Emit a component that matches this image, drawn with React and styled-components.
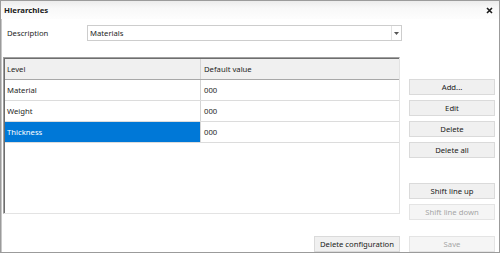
import React from "react";
import styled, { createGlobalStyle } from "styled-components";

const Global = createGlobalStyle`
    html, body {
        margin:0;
        padding:0;
        background:#ffffff;
    }
    body {
        font-family: "Noto Sans", "DejaVu Sans", sans-serif;
        font-size:7.7px;
        color:#1e1e1e;
    }
`

const Window = styled.div`
    width:500px;
    height:253px;
    box-sizing:border-box;
    border:1px solid #9b9b9b;
    box-shadow: inset 1px 0 0 #c8c8c8;
    background:#ffffff;
    display:flex;
    flex-direction:column;
`

const TitleBar = styled.div`
    height:18px;
    display:flex;
    align-items:center;
    justify-content:space-between;
    padding:0 6px 0 3px;
    background:linear-gradient(#ececec, #f8f8f8 40%, #fdfdfd);
`

const Title = styled.div`
    font-weight:bold;
    font-size:7.8px;
    color:#1a1a1a;
`

const Body = styled.div`
    display:flex;
    flex-direction:column;
    padding:6px 4px 0 2px;
`

const FieldRow = styled.div`
    display:flex;
    align-items:center;
    height:16px;
`

const Label = styled.div`
    width:80px;
    padding-left:4px;
`

const Combo = styled.div`
    width:315px;
    height:16px;
    box-sizing:border-box;
    border:1px solid #cdcdcd;
    display:flex;
    align-items:center;
    background:#fff;
`

const ComboText = styled.div`
    flex:1;
    padding-left:2px;
`

const ComboArrow = styled.div`
    width:9px;
    height:14px;
    border-left:1px solid #e2e2e2;
    display:flex;
    align-items:center;
    justify-content:center;
`

const Main = styled.div`
    display:flex;
    gap:9px;
    margin-top:16px;
`

const GridBox = styled.div`
    width:397px;
    height:157px;
    box-sizing:border-box;
    border:1px solid;
    border-color:#a0a0a0 #e3e3e3 #e3e3e3 #a0a0a0;
    box-shadow: inset 1px 1px 0 #6e6e6e;
    padding:1px 0 0 1px;
`

const Row = styled.div`
    display:grid;
    grid-template-columns:196px 1fr;
    height:20px;
    border-bottom:1px solid ${p => (p.$head ? "#a8a8a8" : "#dcdcdc")};
    background:${p => (p.$head ? "#f0f0f0" : "#ffffff")};
`

const Cell = styled.div`
    display:flex;
    align-items:center;
    padding-left:${p => (p.$first ? "2px" : "3px")};
    border-right:1px solid ${p => (p.$first ? "#d4d4d4" : "transparent")};
    background:${p => (p.$selected ? "#0078d7" : "transparent")};
    color:${p => (p.$selected ? "#ffffff" : "#1e1e1e")};
`

const Side = styled.div`
    width:86px;
    display:flex;
    flex-direction:column;
    gap:5px;
    padding-top:22px;
`

const Spacer = styled.div`
    height:15px;
`

const Button = styled.div`
    width:86px;
    height:16px;
    box-sizing:border-box;
    border:1px solid ${p => (p.$disabled ? "#e4e4e4" : "#dadada")};
    background:${p => (p.$disabled ? "#f5f5f5" : "#f0f0f0")};
    color:${p => (p.$disabled ? "#a6a6a6" : "#1a1a1a")};
    display:flex;
    align-items:center;
    justify-content:center;
`

const Footer = styled.div`
    display:flex;
    justify-content:flex-end;
    gap:9px;
    margin-top:16px;
`

const rows = [
    { level: "Material", value: "000" },
    { level: "Weight", value: "000" },
    { level: "Thickness", value: "000", selected: true },
]

const App = () => {
    return (
        <>
            <Global />
            <Window>
                <TitleBar>
                    <Title>Hierarchies</Title>
                    <svg width="7" height="7" viewBox="0 0 7 7">
                        <path d="M1 1 L6 6 M6 1 L1 6" stroke="#1a1a1a" strokeWidth="1.6" />
                    </svg>
                </TitleBar>
                <Body>
                    <FieldRow>
                        <Label>Description</Label>
                        <Combo>
                            <ComboText>Materials</ComboText>
                            <ComboArrow>
                                <svg width="5" height="3" viewBox="0 0 5 3">
                                    <path d="M0 0 H5 L2.5 3 Z" fill="#555" />
                                </svg>
                            </ComboArrow>
                        </Combo>
                    </FieldRow>
                    <Main>
                        <GridBox>
                            <Row $head>
                                <Cell $first>Level</Cell>
                                <Cell>Default value</Cell>
                            </Row>
                            {rows.map(r => (
                                <Row key={r.level}>
                                    <Cell $first $selected={r.selected}>{r.level}</Cell>
                                    <Cell>{r.value}</Cell>
                                </Row>
                            ))}
                        </GridBox>
                        <Side>
                            <Button>Add...</Button>
                            <Button>Edit</Button>
                            <Button>Delete</Button>
                            <Button>Delete all</Button>
                            <Spacer />
                            <Button>Shift line up</Button>
                            <Button $disabled>Shift line down</Button>
                        </Side>
                    </Main>
                    <Footer>
                        <Button>Delete configuration</Button>
                        <Button $disabled>Save</Button>
                    </Footer>
                </Body>
            </Window>
        </>
    );
}

export default App;
